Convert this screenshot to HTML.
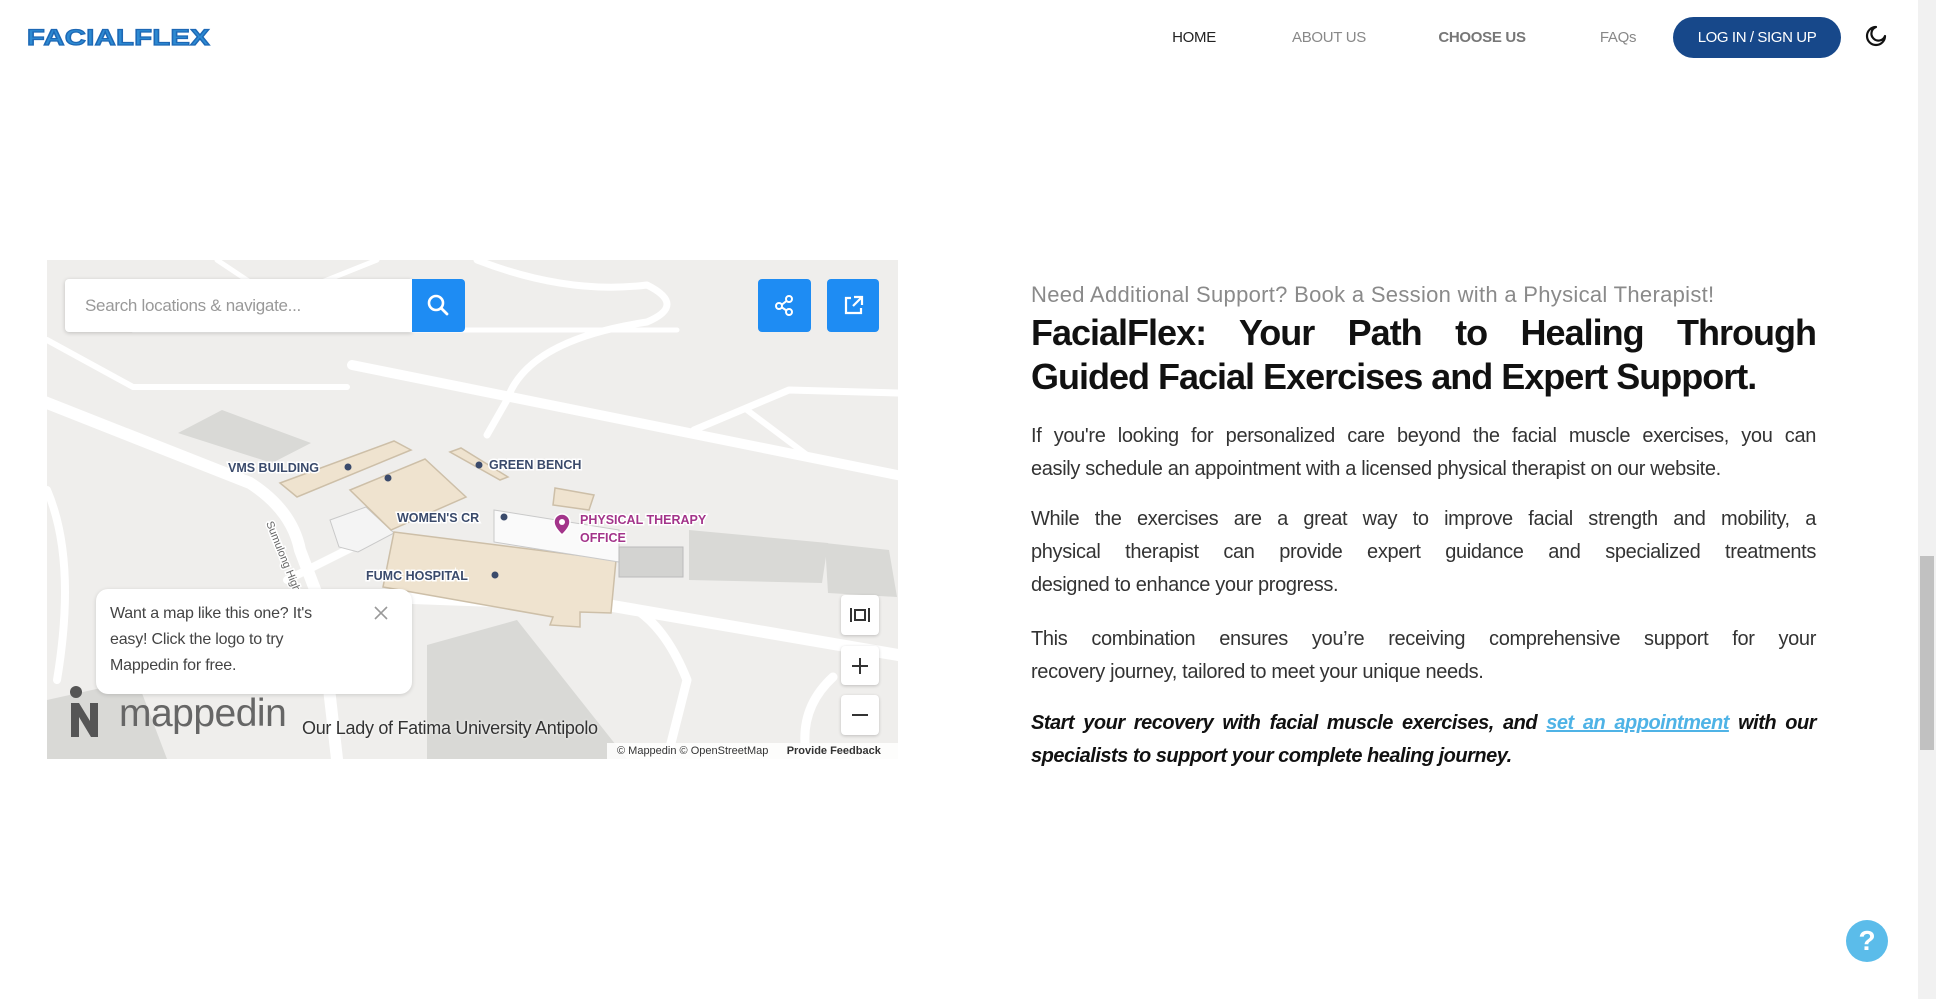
<!DOCTYPE html>
<html><head><meta charset="utf-8"><style>
*{margin:0;padding:0;box-sizing:border-box}
html,body{width:1936px;height:999px;overflow:hidden;background:#fff;font-family:"Liberation Sans",sans-serif}
.logo{position:absolute;left:27px;top:25px;font-size:22px;font-weight:900;color:#2d8ad2;transform:scaleX(1.32);transform-origin:left;letter-spacing:0.3px;-webkit-text-stroke:1.2px #1d68b5}
.nav{position:absolute;top:29px;font-size:15px;transform:translateX(-50%);white-space:nowrap;letter-spacing:-0.3px}
.btn{position:absolute;left:1673px;top:17px;width:168px;height:41px;border-radius:21px;background:#17488a;color:#fff;font-size:15px;text-align:center;line-height:41px;letter-spacing:-0.4px}
.sb{position:absolute;left:1918px;top:0;width:18px;height:999px;background:#f1f1f1}
.thumb{position:absolute;left:1920px;top:556px;width:14px;height:194px;background:#c1c1c1}
.map{position:absolute;left:47px;top:260px;width:851px;height:499px;overflow:hidden;background:#efeeec}
.txt{position:absolute;left:1031px;width:785px;color:#222}
.j{text-align:justify;text-align-last:justify;white-space:nowrap}
.p{font-size:20px;line-height:33px;letter-spacing:-0.35px;color:#333}
.help{position:absolute;left:1846px;top:920px;width:42px;height:42px;border-radius:50%;background:#5bbcea;color:#fff;font-weight:bold;font-size:28px;text-align:center;line-height:42px}
</style></head><body>
<div class="logo">FACIALFLEX</div>
<div class="nav" style="left:1194px;color:#222">HOME</div>
<div class="nav" style="left:1329px;color:#888">ABOUT US</div>
<div class="nav" style="left:1482px;color:#777;font-weight:bold">CHOOSE US</div>
<div class="nav" style="left:1618px;color:#888">FAQs</div>
<div class="btn">LOG IN / SIGN UP</div>
<svg style="position:absolute;left:1864px;top:24px" width="24" height="24" viewBox="0 0 24 24"><path d="M12 3a7 7 0 1 0 9 9 9 9 0 1 1-9-9z" fill="none" stroke="#111" stroke-width="2.2" stroke-linejoin="round"/></svg>
<div class="sb"></div><div class="thumb"></div>

<div class="map">
<svg width="851" height="499" viewBox="0 0 851 499" style="position:absolute;left:0;top:0">
<g fill="#d9d9d6">
<polygon points="131,173 175,150 264,183 225,203"/>
<polygon points="642,270 781,283 775,323 642,320"/>
<polygon points="778,283 842,290 850,337 781,333"/>
<polygon points="380,385 470,360 580,499 380,499"/>
<polygon points="0,440 90,420 120,499 0,499"/>
</g>
<g fill="none" stroke="#fff" stroke-linecap="round" stroke-linejoin="round">
<path d="M-5,141 L203,223 Q245,250 253,290 L272,340 L290,499" stroke-width="12"/>
<path d="M305,105 L860,217" stroke-width="10"/>
<path d="M0,80 L86,127 L300,127" stroke-width="6"/>
<path d="M86,70 L630,70" stroke-width="5"/>
<path d="M430,0 Q520,35 600,25 Q640,45 600,62 Q480,80 460,140 L440,175" stroke-width="7"/>
<path d="M647,170 L742,130 L851,133" stroke-width="7"/>
<path d="M700,150 L760,195 L851,215" stroke-width="6"/>
<path d="M280,335 L560,345 L851,395" stroke-width="12"/>
<path d="M590,350 Q620,370 640,420 L620,499" stroke-width="9"/>
<path d="M786,417 Q750,450 760,499" stroke-width="9"/>
<path d="M170,0 L230,40" stroke-width="5"/>
<path d="M230,40 L330,0" stroke-width="5"/>
<path d="M0,230 Q30,300 10,420" stroke-width="8"/>
<path d="M320,280 L240,320" stroke-width="8"/>
</g>
<polygon points="283,260 319,247 347,273 311,292 292,287" fill="#f4f4f4" stroke="#c9c9c9"/>
<g fill="#efe3cf" stroke="#cdbfa8" stroke-width="1.5">
<polygon points="233,223 347,181 364,190 250,237"/>
<polygon points="303,230 378,199 419,237 344,270"/>
<polygon points="403,192 414,188 461,217 453,220"/>
<polygon points="508,228 547,235 542,250 506,245"/>
<polygon points="347,272 569,300 564,353 533,352 533,367 503,365 506,357 336,327"/>
</g>
<polygon points="447,250 572,270 572,302 447,282" fill="#fafafa" stroke="#c9c9c9"/>
<rect x="572" y="287" width="64" height="30" fill="#d3d3d1" stroke="#bbb"/>
<g fill="#3a4a6b">
<circle cx="301" cy="207" r="3.5"/><circle cx="341" cy="218" r="3.5"/><circle cx="432" cy="205" r="3.5"/><circle cx="457" cy="257" r="3.5"/><circle cx="448" cy="315" r="3.5"/>
</g>
<g font-family="Liberation Sans,sans-serif" font-weight="bold" font-size="12.5" fill="#3a4a6b" stroke="#fff" stroke-width="3" paint-order="stroke">
<text x="181" y="212">VMS BUILDING</text>
<text x="442" y="209">GREEN BENCH</text>
<text x="350" y="262">WOMEN'S CR</text>
<text x="319" y="320">FUMC HOSPITAL</text>
<text x="533" y="264" fill="#a3348a">PHYSICAL THERAPY</text>
<text x="533" y="282" fill="#a3348a">OFFICE</text>
<text x="219" y="263" font-weight="normal" font-size="11" fill="#666" transform="rotate(68 219 263)">Sumulong High</text>
</g>
<path d="M515,262 m-8,0 a8,8 0 1 1 16,0 c0,6 -8,13 -8,13 c0,0 -8,-7 -8,-13z" fill="#a3348a" stroke="#fff" stroke-width="1.5"/>
<circle cx="515" cy="262" r="3" fill="#fff"/>
</svg>
<div style="position:absolute;left:18px;top:19px;width:347px;height:53px;background:#fff;border-radius:4px 0 0 4px;box-shadow:0 1px 4px rgba(0,0,0,.2);font-size:17px;color:#999;line-height:53px;padding-left:20px;letter-spacing:-0.3px">Search locations &amp; navigate...</div>
<div style="position:absolute;left:365px;top:19px;width:53px;height:53px;background:#1e8cf3;border-radius:0 4px 4px 0">
<svg width="53" height="53" viewBox="0 0 53 53"><circle cx="24" cy="24" r="7" fill="none" stroke="#fff" stroke-width="2.6"/><path d="M29 29l6 6" stroke="#fff" stroke-width="2.8" stroke-linecap="round"/></svg></div>
<div style="position:absolute;left:711px;top:19px;width:53px;height:53px;background:#1e8cf3;border-radius:4px">
<svg width="53" height="53" viewBox="0 0 53 53"><g fill="none" stroke="#fff" stroke-width="2"><circle cx="31" cy="20" r="3"/><circle cx="21" cy="27" r="3"/><circle cx="31" cy="33" r="3"/><path d="M24 25.5l4.5-3.5M24 28.5l4.5 3"/></g></svg></div>
<div style="position:absolute;left:780px;top:19px;width:52px;height:53px;background:#1e8cf3;border-radius:4px">
<svg width="52" height="53" viewBox="0 0 52 53"><g fill="none" stroke="#fff" stroke-width="2.2"><path d="M24 19h-5v15h15v-5"/><path d="M27 18h8v8M35 18l-9 9"/></g></svg></div>
<div style="position:absolute;left:794px;top:335px;width:38px;height:40px;background:#fff;border-radius:4px;box-shadow:0 1px 3px rgba(0,0,0,.2)"><svg width="38" height="40"><g stroke="#333" stroke-width="2" fill="none"><path d="M10 13v14M28 13v14"/><rect x="14" y="15" width="10" height="10"/></g></svg></div>
<div style="position:absolute;left:794px;top:386px;width:38px;height:39px;background:#fff;border-radius:4px;box-shadow:0 1px 3px rgba(0,0,0,.2)"><svg width="38" height="39"><path d="M19 12v16M11 20h16" stroke="#333" stroke-width="2"/></svg></div>
<div style="position:absolute;left:794px;top:435px;width:38px;height:40px;background:#fff;border-radius:4px;box-shadow:0 1px 3px rgba(0,0,0,.2)"><svg width="38" height="40"><path d="M11 20h16" stroke="#333" stroke-width="2"/></svg></div>
<div style="position:absolute;left:49px;top:329px;width:316px;height:105px;background:#fff;border-radius:12px;box-shadow:0 1px 4px rgba(0,0,0,.15);padding:12px 0 0 14px;font-size:16px;line-height:26px;color:#444;letter-spacing:-0.2px">Want a map like this one? It's<br>easy! Click the logo to try<br>Mappedin for free.
<svg style="position:absolute;left:277px;top:16px" width="16" height="16"><path d="M2 2l12 12M14 2L2 14" stroke="#999" stroke-width="1.6"/></svg></div>
<svg style="position:absolute;left:21px;top:425px" width="32" height="54"><circle cx="8" cy="7" r="6" fill="#555"/><path d="M3 18v34h8V32l12 20h7V18h-8v18L11 18z" fill="#555"/></svg>
<div style="position:absolute;left:72px;top:432px;font-size:39px;color:#666;letter-spacing:-0.5px">mappedin</div>
<div style="position:absolute;left:255px;top:458px;font-size:18px;color:#333;letter-spacing:-0.3px;text-shadow:0 0 3px #fff">Our Lady of Fatima University Antipolo</div>
<div style="position:absolute;left:560px;top:483px;width:291px;height:16px;background:rgba(255,255,255,.85);font-size:11px;color:#333;line-height:16px;padding-left:10px;white-space:nowrap">© Mappedin © OpenStreetMap &nbsp;&nbsp;&nbsp;&nbsp; <b>Provide Feedback</b></div>
</div>

<div class="txt" style="top:282px;font-size:22px;color:#8a8a8a;letter-spacing:0.3px;white-space:nowrap">Need Additional Support? Book a Session with a Physical Therapist!</div>
<div class="txt" style="top:311px;font-size:36px;font-weight:bold;line-height:44px;letter-spacing:-1px;color:#111">
<div class="j">FacialFlex: Your Path to Healing Through</div>
<div style="white-space:nowrap">Guided Facial Exercises and Expert Support.</div></div>
<div class="txt p" style="top:420px">
<div class="j">If you're looking for personalized care beyond the facial muscle exercises, you can</div>
<div>easily schedule an appointment with a licensed physical therapist on our website.</div></div>
<div class="txt p" style="top:503px">
<div class="j">While the exercises are a great way to improve facial strength and mobility, a</div>
<div class="j">physical therapist can provide expert guidance and specialized treatments</div>
<div>designed to enhance your progress.</div></div>
<div class="txt p" style="top:623px">
<div class="j">This combination ensures you’re receiving comprehensive support for your</div>
<div>recovery journey, tailored to meet your unique needs.</div></div>
<div class="txt p" style="top:707px;font-weight:bold;font-style:italic;color:#111;letter-spacing:-0.5px">
<div class="j">Start your recovery with facial muscle exercises, and <span style="color:#4fb3e6;text-decoration:underline">set an appointment</span> with our</div>
<div>specialists to support your complete healing journey.</div></div>
<div class="help">?</div>
</body></html>
